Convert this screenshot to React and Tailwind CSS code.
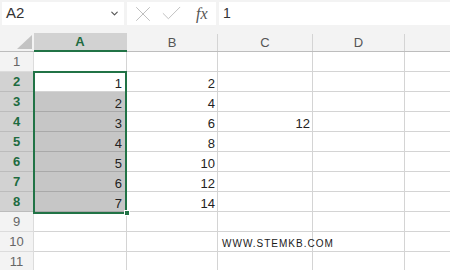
import { ChevronDown, X, Check } from 'lucide-react'

const COLS = ['A', 'B', 'C', 'D', 'E']
const ROWS = [
  { n: 1, a: '', b: '', c: '' },
  { n: 2, a: '1', b: '2', c: '' },
  { n: 3, a: '2', b: '4', c: '' },
  { n: 4, a: '3', b: '6', c: '12' },
  { n: 5, a: '4', b: '8', c: '' },
  { n: 6, a: '5', b: '10', c: '' },
  { n: 7, a: '6', b: '12', c: '' },
  { n: 8, a: '7', b: '14', c: '' },
  { n: 9, a: '', b: '', c: '' },
  { n: 10, a: '', b: '', c: '', note: 'WWW.STEMKB.COM' },
  { n: 11, a: '', b: '', c: '' },
]

const font = { fontFamily: '"Liberation Sans", Arial, sans-serif' }

export default function App() {
  return (
    <div className="w-[450px] h-[270px] overflow-hidden bg-[#f3f3f3] text-[#222]" style={font}>
      {/* Formula bar */}
      <div className="flex h-[27px] pt-[2px] pl-[2px]">
        <div className="w-[122px] h-[23px] bg-white flex items-center justify-between pl-[4px] pr-[4px]">
          <span className="text-[15px] text-[#333]">A2</span>
          <ChevronDown size={11} strokeWidth={2.5} className="text-[#555]" />
        </div>
        <div className="ml-[3px] w-[89px] h-[23px] bg-white flex items-center pl-[3px]">
          <X size={26} strokeWidth={0.9} className="text-[#bdbdbd]" />
          <Check size={25} strokeWidth={0.9} className="ml-[3px] text-[#bdbdbd]" />
          <span className="ml-[12px] text-[16px] italic text-[#555]" style={{ fontFamily: '"Liberation Serif", serif' }}>fx</span>
        </div>
        <div className="ml-[3px] flex-1 h-[23px] bg-white flex items-center pl-[4px]">
          <span className="text-[14px] text-[#333]">1</span>
        </div>
      </div>
      <div className="h-[6px]" />

      {/* Sheet */}
      <div className="relative">
        <div className="grid grid-cols-[34px_93px_91px_95px_92px_92px]">
          {/* Corner */}
          <div className="h-[19px] border-b border-[#bdbdbd] relative">
            <div className="absolute right-[2px] bottom-[2px] w-0 h-0 border-l-[15px] border-l-transparent border-b-[14px] border-b-[#c3c3c3]" />
          </div>
          {COLS.map(c => (
            <div key={c}
              className={`h-[19px] flex items-center justify-center text-[13px] ${c === 'A'
                ? 'bg-[#d2d2d2] border-b-2 border-[#217346] font-bold text-[#1e6b40]'
                : 'border-b border-[#bdbdbd] text-[#555]'}`}>
              <div className={`flex-1 h-full flex items-center justify-center ${c === 'A' ? '' : 'pt-[1px]'} ${c === 'E' ? 'pl-[8px]' : ''}`}>{c}</div>
              <div className={`w-px self-end ${c === 'A' ? 'h-full bg-[#d2d2d2]' : 'h-[17px] bg-[#d4d4d4]'}`} />
            </div>
          ))}

          {ROWS.map(r => {
            const sel = r.n >= 2 && r.n <= 8
            const grey = r.n >= 3 && r.n <= 8
            return [
              <div key={`h${r.n}`}
                className={`h-[20px] flex items-center justify-center text-[13px] border-b border-r ${sel
                  ? 'bg-[#d2d2d2] border-[#bcbcbc] font-bold text-[#1e6b40]'
                  : 'border-[#dcdcdc] text-[#666]'}`}>
                {r.n}
              </div>,
              <div key={`a${r.n}`}
                className={`h-[20px] flex items-end justify-end pr-[4px] text-[13px] leading-[14px] border-b border-r ${grey ? 'bg-[#c6c6c6] border-[#a9a9a9]' : 'bg-white border-[#d4d4d4]'}`}>
                {r.a}
              </div>,
              <div key={`b${r.n}`} className="h-[20px] bg-white flex items-end justify-end pr-[2px] text-[13px] leading-[14px] border-b border-r border-[#d4d4d4]">
                {r.b}
              </div>,
              <div key={`c${r.n}`} className="h-[20px] bg-white flex items-end justify-end pr-[2px] text-[13px] leading-[14px] border-b border-r border-[#d4d4d4] relative">
                {r.note && (
                  <span className="absolute left-[4px] top-[5px] text-[10px] tracking-[1px] whitespace-nowrap text-[#1a1a1a]">{r.note}</span>
                )}
                {r.c}
              </div>,
              <div key={`d${r.n}`} className="h-[20px] bg-white border-b border-r border-[#d4d4d4]" />,
              <div key={`e${r.n}`} className="h-[20px] bg-white border-b border-r border-[#d4d4d4]" />,
            ]
          })}
        </div>

        {/* Selection outline A2:A8 */}
        <div className="absolute left-[33px] top-[38px] w-[94px] h-[143px] border-2 border-[#217346] pointer-events-none" />
        <div className="absolute left-[124px] top-[177px] w-[6px] h-[6px] bg-[#217346] border border-white" />
      </div>
    </div>
  )
}
